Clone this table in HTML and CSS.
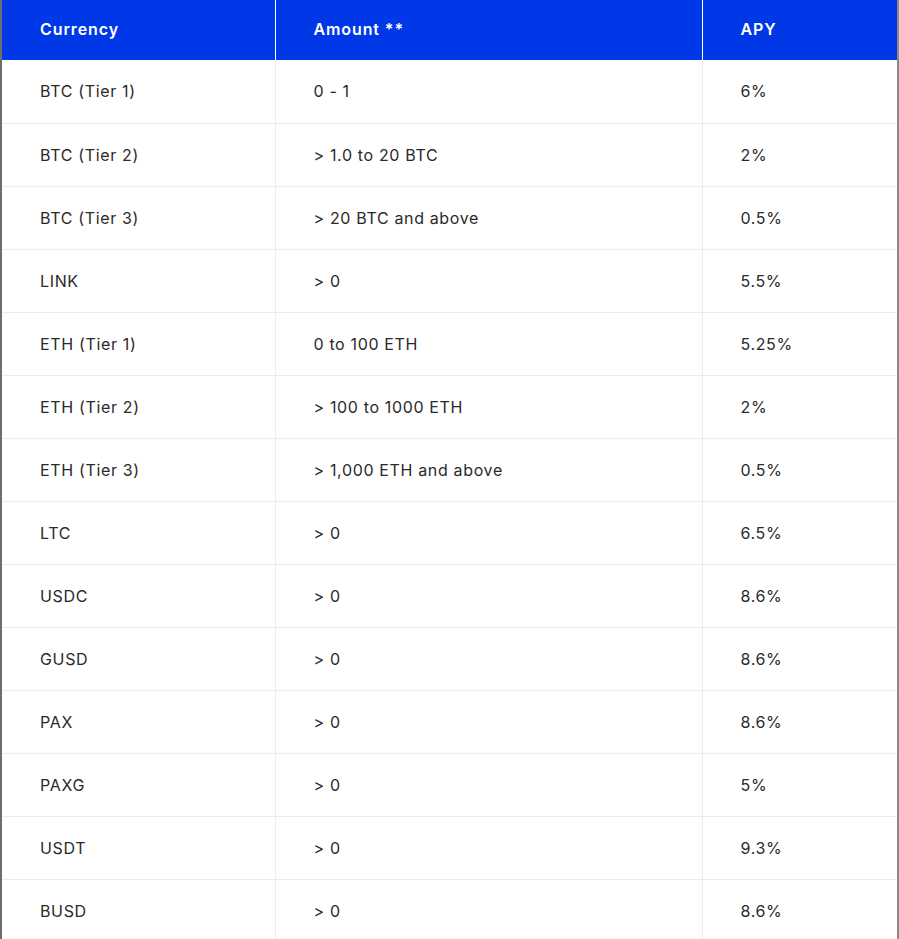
FILE: index.html
```html
<!DOCTYPE html>
<html>
<head>
<meta charset="utf-8">
<link rel="stylesheet" href="styles.css">
</head>
<body>
<div class="frame">
<table class="rates">
  <colgroup>
    <col class="c1"><col class="c2"><col class="c3">
  </colgroup>
  <thead>
    <tr><th>Currency</th><th>Amount **</th><th>APY</th></tr>
  </thead>
  <tbody>
    <tr><td>BTC (Tier 1)</td><td>0 - 1</td><td>6%</td></tr>
    <tr><td>BTC (Tier 2)</td><td>&gt; 1.0 to 20 BTC</td><td>2%</td></tr>
    <tr><td>BTC (Tier 3)</td><td>&gt; 20 BTC and above</td><td>0.5%</td></tr>
    <tr><td>LINK</td><td>&gt; 0</td><td>5.5%</td></tr>
    <tr><td>ETH (Tier 1)</td><td>0 to 100 ETH</td><td>5.25%</td></tr>
    <tr><td>ETH (Tier 2)</td><td>&gt; 100 to 1000 ETH</td><td>2%</td></tr>
    <tr><td>ETH (Tier 3)</td><td>&gt; 1,000 ETH and above</td><td>0.5%</td></tr>
    <tr><td>LTC</td><td>&gt; 0</td><td>6.5%</td></tr>
    <tr><td>USDC</td><td>&gt; 0</td><td>8.6%</td></tr>
    <tr><td>GUSD</td><td>&gt; 0</td><td>8.6%</td></tr>
    <tr><td>PAX</td><td>&gt; 0</td><td>8.6%</td></tr>
    <tr><td>PAXG</td><td>&gt; 0</td><td>5%</td></tr>
    <tr><td>USDT</td><td>&gt; 0</td><td>9.3%</td></tr>
    <tr><td>BUSD</td><td>&gt; 0</td><td>8.6%</td></tr>
  </tbody>
</table>
</div>
</body>
</html>
```

FILE: styles.css
```css
html, body {
  margin: 0;
  padding: 0;
  background: #ffffff;
}
.frame {
  width: 899px;
  height: 939px;
  overflow: hidden;
  box-sizing: border-box;
  border-left: 2px solid #6e6e6e;
  border-right: 2px solid #8a8a8a;
}
.rates {
  width: 100%;
  border-collapse: collapse;
  table-layout: fixed;
  font-family: Inter, "Noto Sans", sans-serif;
  font-size: 16px;
  letter-spacing: 0.65px;
  color: #2a2a2a;
}
.c1 { width: 273px; }
.c2 { width: 427px; }
.rates th {
  background: #0037e6;
  color: #ffffff;
  font-weight: 600;
  letter-spacing: 0.9px;
  text-align: left;
  height: 60px;
  padding: 0 0 2px 38px;
  box-sizing: border-box;
  border-left: 1px solid #ffffff;
}
.rates th:first-child { border-left: none; }
.rates td {
  height: 63px;
  box-sizing: border-box;
  padding: 0 0 0 38px;
  border-top: 1px solid #ececec;
  border-left: 1px solid #ececec;
  font-weight: 400;
}
.rates td:first-child { border-left: none; }
.rates tbody tr:first-child td { border-top: none; }
```
